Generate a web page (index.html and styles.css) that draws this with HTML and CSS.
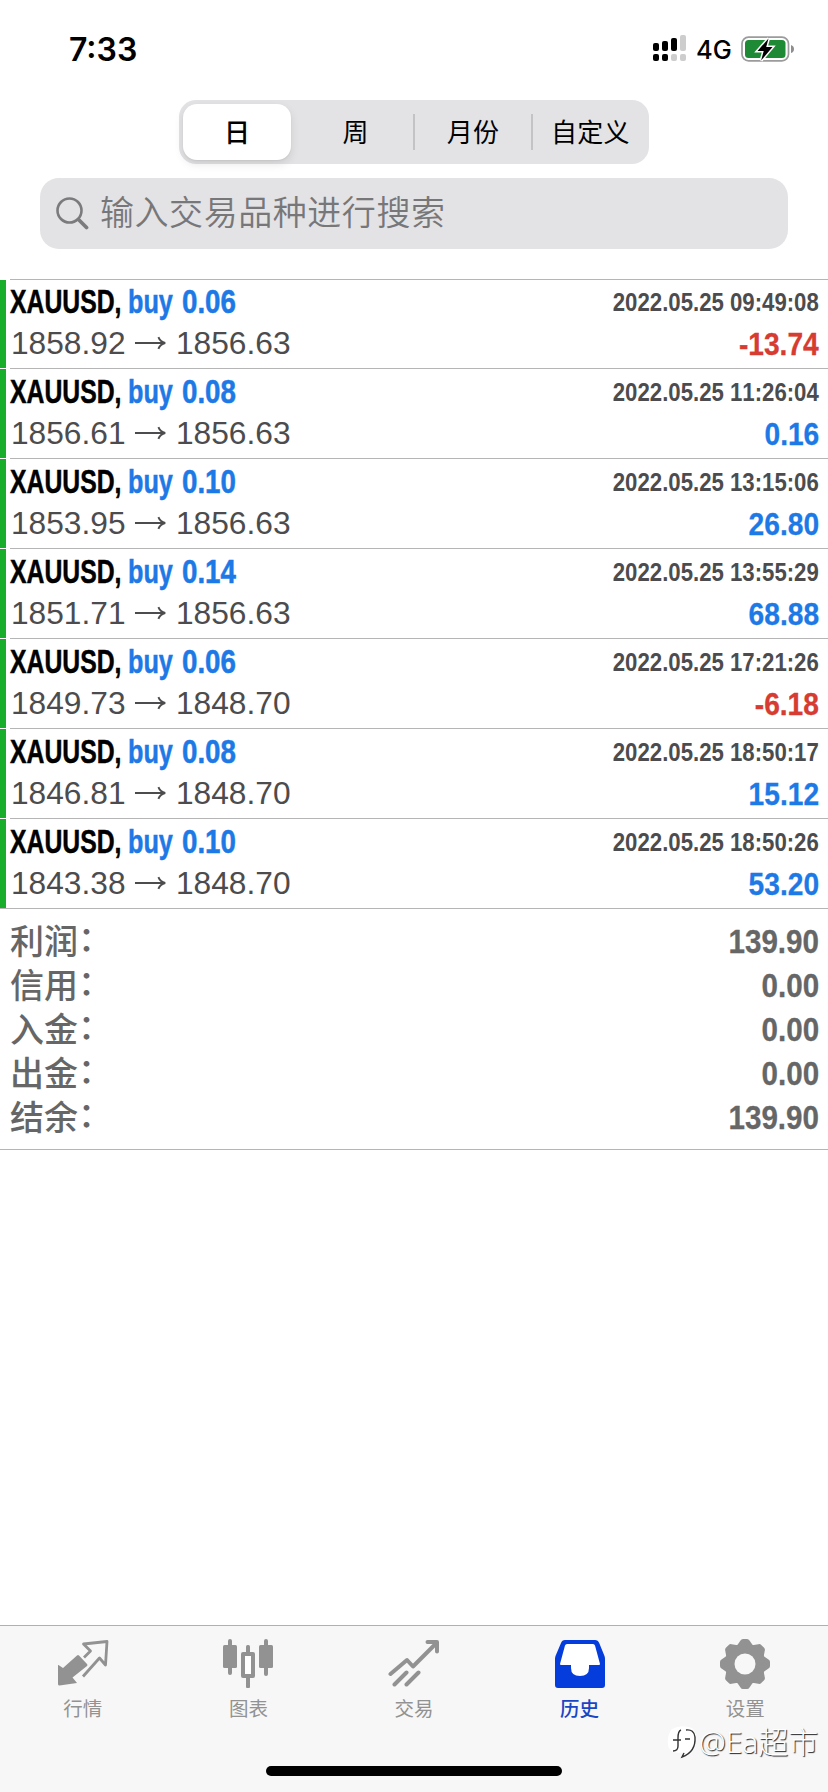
FILE: index.html
```html
<!DOCTYPE html>
<html lang="zh-CN">
<head>
<meta charset="utf-8">
<title>历史</title>
<link rel="stylesheet" href="styles.css">
</head>
<body>
<div class="screen">
  <header class="status">
    <span class="time">7:33</span>
    <div class="status-right">
      <svg class="signal" width="34" height="27" viewBox="0 0 34 27">
        <g fill="#000"><rect x="0" y="8" width="6" height="8" rx="2"/><rect x="9" y="6" width="6" height="10" rx="2"/><rect x="18" y="3" width="6" height="13" rx="2"/><rect x="0" y="19" width="6" height="7" rx="2"/><rect x="9" y="19" width="6" height="7" rx="2"/></g>
        <g fill="#cdcdcd"><rect x="27" y="0" width="6" height="16" rx="2"/><rect x="18" y="19" width="6" height="7" rx="2"/><rect x="27" y="19" width="6" height="7" rx="2"/></g>
      </svg>
      <span class="network">4G</span>
      <svg class="battery" width="54" height="28" viewBox="0 0 54 28">
        <rect x="1" y="2.2" width="46.5" height="23.6" rx="6.5" fill="#fff" stroke="#9b9b9b" stroke-width="1.7"/>
        <rect x="4" y="5" width="40.500" height="18" rx="3.500" fill="#1f8a36"/>
        <path d="M50 10q3 1 3 4t-3 4z" fill="#8e8e8e"/>
        <path d="M27.500 3.500 16.500 16h6.200l-2.600 9.500L31.500 12h-6.300z" fill="#000" stroke="#fff" stroke-width="3" paint-order="stroke"/>
      </svg>
    </div>
  </header>

  <nav class="segments">
    <span class="segment selected">日</span>
    <span class="segment">周</span>
    <span class="segment divided">月份</span>
    <span class="segment divided">自定义</span>
  </nav>

  <div class="search">
    <svg width="33" height="33" viewBox="0 0 33 33" fill="none" stroke="#7b7b7e"><circle cx="13.500" cy="13.500" r="12" stroke-width="2.600"/><path d="M22.500 22.500 30.500 30.500" stroke-width="3.800" stroke-linecap="round"/></svg>
    <span class="placeholder">输入交易品种进行搜索</span>
  </div>

  <main class="deals" id="deals"></main>

  <section class="summary">
    <div class="total"><span class="total-name">利润<span class="colon">：</span></span><span class="total-value">139.90</span></div>
    <div class="total"><span class="total-name">信用<span class="colon">：</span></span><span class="total-value">0.00</span></div>
    <div class="total"><span class="total-name">入金<span class="colon">：</span></span><span class="total-value">0.00</span></div>
    <div class="total"><span class="total-name">出金<span class="colon">：</span></span><span class="total-value">0.00</span></div>
    <div class="total"><span class="total-name">结余<span class="colon">：</span></span><span class="total-value">139.90</span></div>
  </section>

  <footer class="tabbar">
    <div class="tabs">
      <div class="tab">
        <svg width="52" height="52" viewBox="0 0 52 52"><path d="M1.500 27 6 30 20 17.500q1-1 2 0l8 8.500q1 1 0 2L15.500 39.500 20 45 2.500 47.500q-1.500 0-1.500-1.500V27z" fill="#929292"/><path d="M27 19.500 33.500 13 26.500 6 50 3.500 48.500 27 42.500 20 26 38.500" fill="none" stroke="#929292" stroke-width="2.800" stroke-linejoin="round"/></svg>
        <span>行情</span>
      </div>
      <div class="tab">
        <svg width="52" height="52" viewBox="0 0 52 52"><g fill="#929292"><rect x="6" y="1" width="4" height="36" rx="2"/><rect x="1" y="7" width="14" height="23" rx="1.500"/><rect x="42" y="1" width="4" height="37" rx="2"/><rect x="37" y="7" width="14" height="23" rx="1.500"/><rect x="24" y="7" width="4" height="10" rx="1.500"/><rect x="24" y="37" width="4" height="13" rx="1"/></g><rect x="21" y="16" width="10" height="22" fill="#fff" stroke="#929292" stroke-width="4" stroke-linejoin="round"/></svg>
        <span>图表</span>
      </div>
      <div class="tab">
        <svg width="52" height="52" viewBox="0 0 52 52" fill="none" stroke="#929292" stroke-width="4" stroke-linecap="round" stroke-linejoin="round"><path d="M2.500 36 19 22l6 6.500L48.500 5M39.500 4H49v9.500M6.500 46.500l12-12M18.500 46.500l12-12"/></svg>
        <span>交易</span>
      </div>
      <div class="tab active">
        <svg width="52" height="52" viewBox="0 0 52 52"><path d="M11 2h30q3 0 4.200 3L50.500 18q.5 1.500.5 3v26q0 3-3 3H4q-3 0-3-3V21q0-1.500.5-3L7 5q1-3 4-3z" fill="#043ddb"/><path d="M13 6h26q1.500 0 2 1.500L46 26q0 1-1 1H35v3q0 8-9 8t-9-8v-3H7q-1 0-1-1L11 7.500Q11.500 6 13 6z" fill="#fff"/></svg>
        <span>历史</span>
      </div>
      <div class="tab">
        <svg width="52" height="52" viewBox="0 0 52 52"><g fill="#929292"><circle cx="26" cy="26" r="20.500"/><g id="teeth"><path id="tooth" d="M17 9 21.500 2.500Q22.300 1 24 1h4q1.700 0 2.500 1.500L35 9z"/><use href="#tooth" transform="rotate(45 26 26)"/><use href="#tooth" transform="rotate(90 26 26)"/><use href="#tooth" transform="rotate(135 26 26)"/></g><use href="#teeth" transform="rotate(180 26 26)"/></g><circle cx="26" cy="26" r="10.500" fill="#f7f7f7"/></svg>
        <span>设置</span>
      </div>
    </div>
    <div class="home"></div>
  </footer>

  <div class="watermark">
    <svg width="32" height="34" viewBox="0 0 32 34"><path d="M5 4Q14-1 25 3q5 4 4 14-1 11-14 14l4-4Q2 30 1 20 0 9 5 4z" fill="#fff"/><path d="M19 5q8-1 9 7 1 15-13 20l2-4M14 5q-3 1-3 8v8q0 5-5 5M6 15h8M18 14h5" fill="none" stroke="#333" stroke-width="1.400"/></svg>
    <span>@Ea超市</span>
  </div>
</div>
<script src="deals.js"></script>
</body>
</html>
```
FILE: styles.css
```css
* { box-sizing: border-box; }
body { margin: 0; background: #fff; font-family: "Liberation Sans", "Noto Sans CJK SC", sans-serif; }
.screen { position: relative; width: 828px; height: 1792px; display: flex; flex-direction: column; overflow: hidden; background: #fff; }

.status { height: 100px; flex: none; display: flex; justify-content: space-between; padding: 34px 33px 0 69px; font-family: Inter, sans-serif; }
.time { font-size: 32px; line-height: 32px; font-weight: 600; }
.status-right { display: flex; align-items: flex-start; }
.signal { margin-top: 1px; }
.network { font-size: 25.500px; font-weight: 450; line-height: 32px; margin-left: 9px; width: 45px; white-space: nowrap; }
.battery { margin-top: 1px; }

.segments { width: 470px; height: 64px; flex: none; margin: 0 auto; display: flex; padding: 4px 0 4px 4px; background: #e3e3e5; border-radius: 17px; font-family: "Noto Sans CJK SC", sans-serif; font-size: 26px; }
.segment { flex: 1; display: flex; align-items: center; justify-content: center; position: relative; padding-bottom: 3px; letter-spacing: .2px; }
.segment.selected { flex: 0 0 108px; margin-right: 6px; border-radius: 14px; background: #fff; font-weight: 500; box-shadow: 0 4px 10px rgba(0,0,0,.1), 0 1px 2px rgba(0,0,0,.06); }
.segment.divided::before { content: ""; position: absolute; left: -1px; top: 10px; width: 2px; height: 36px; background: #c3c3c6; }

.search { height: 71px; flex: none; margin: 14px 40px 0; display: flex; align-items: center; padding-left: 16px; gap: 11px; background: #e3e3e5; border-radius: 19px; }
.placeholder { font-family: "Noto Sans CJK SC", sans-serif; font-size: 34px; font-weight: 350; line-height: 68px; letter-spacing: .55px; color: #77777a; white-space: nowrap; padding-bottom: 5px; }

.deals { flex: none; margin-top: 30px; }
.deal { height: 90px; display: flex; background: #fff; }
.deal:first-child { height: 89px; }
.deal::before { content: ""; flex: none; width: 6px; margin: 1px 4px 0 0; background: #18ae2b; }
.deal-body { flex: 1; border-top: 1px solid #b5b5b5; padding: 1px 9px 0 0; }
.deal:first-child .deal-body { padding-top: 0; }
.line { display: flex; height: 42px; align-items: center; white-space: nowrap; font-kerning: none; }
.line + .line { height: 40px; }
.symbol, .side, .volume { font-weight: bold; font-size: 33px; line-height: 42px; transform-origin: 0 50%; padding-top: 2px; -webkit-text-stroke: .5px currentColor; }
.symbol { width: 118px; transform: scaleX(.75); }
.side { width: 54px; transform: scaleX(.765); color: #1d79e6; }
.volume { transform: scaleX(.84); color: #1d79e6; }
.when { margin-left: auto; font-weight: bold; font-size: 25.500px; line-height: 42px; color: #4c4c4e; transform: scaleX(.87); transform-origin: 100% 50%; padding-top: 2px; }
.price { width: 124px; padding-left: 1px; font-size: 31.700px; line-height: 40px; padding-top: 2px; color: #4c4c4e; }
.arrow { width: 41px; height: 16px; flex: none; margin-top: 1px; }
.profit { margin-left: auto; font-weight: bold; font-size: 32px; line-height: 40px; color: #1d79e6; transform: scaleX(.88); transform-origin: 100% 50%; padding-top: 4px; -webkit-text-stroke: .3px currentColor; }
.profit.loss { color: #d63c31; }

.summary { flex: none; height: 242px; border-top: 1px solid #b5b5b5; border-bottom: 1px solid #b5b5b5; padding: 9px 9px 0 10px; }
.total { height: 44px; display: flex; justify-content: space-between; align-items: center; color: #666; }
.total-name { font-family: "Noto Sans CJK SC", sans-serif; font-size: 34px; font-weight: 500; line-height: 44px; }
.colon { display: inline-block; transform: translate(0, -3px); }
.total-value { font-size: 34px; font-weight: bold; line-height: 44px; transform: scaleX(.87); transform-origin: 100% 50%; padding-top: 1px; -webkit-text-stroke: .3px currentColor; }

.tabbar { margin-top: auto; flex: none; height: 167px; border-top: 1px solid #b0b0b0; background: #f7f7f7; display: flex; flex-direction: column; justify-content: space-between; align-items: center; padding: 12px 0 16px; }
.tabs { width: 828px; display: flex; }
.tab { flex: 1; display: flex; flex-direction: column; align-items: center; color: #929292; font-family: "Noto Sans CJK SC", sans-serif; font-size: 19.500px; line-height: 28px; }
.tab span { margin-top: 4px; }
.tab.active { color: #1c45c4; font-weight: 500; }
.home { width: 296px; height: 10px; border-radius: 5px; background: #000; }

.watermark { position: absolute; left: 667px; top: 1725px; display: flex; align-items: center; color: #fff; font-family: "Noto Sans", "Noto Sans CJK SC", sans-serif; font-size: 30px; font-weight: 300; line-height: 32px; text-shadow: 1px 1px 1px #222; white-space: nowrap; }
```
FILE: deals.js
```javascript
const deals = [
  ["0.06", "2022.05.25 09:49:08", "1858.92", "1856.63", "-13.74"],
  ["0.08", "2022.05.25 11:26:04", "1856.61", "1856.63", "0.16"],
  ["0.10", "2022.05.25 13:15:06", "1853.95", "1856.63", "26.80"],
  ["0.14", "2022.05.25 13:55:29", "1851.71", "1856.63", "68.88"],
  ["0.06", "2022.05.25 17:21:26", "1849.73", "1848.70", "-6.18"],
  ["0.08", "2022.05.25 18:50:17", "1846.81", "1848.70", "15.12"],
  ["0.10", "2022.05.25 18:50:26", "1843.38", "1848.70", "53.20"]
];

document.getElementById("deals").innerHTML = deals.map(([volume, when, open, close, profit]) => `
  <div class="deal"><div class="deal-body">
    <div class="line"><span class="symbol">XAUUSD,</span><span class="side">buy</span><span class="volume">${volume}</span><span class="when">${when}</span></div>
    <div class="line"><span class="price">${open}</span><svg class="arrow" viewBox="0 0 42 16"><path d="M1 8h30M25 2q2 5 7 6-5 1-7 6" fill="none" stroke="#4c4c4e" stroke-width="2"/></svg><span class="price">${close}</span><span class="profit${profit.startsWith("-") ? " loss" : ""}">${profit}</span></div>
  </div></div>`).join("");
```
